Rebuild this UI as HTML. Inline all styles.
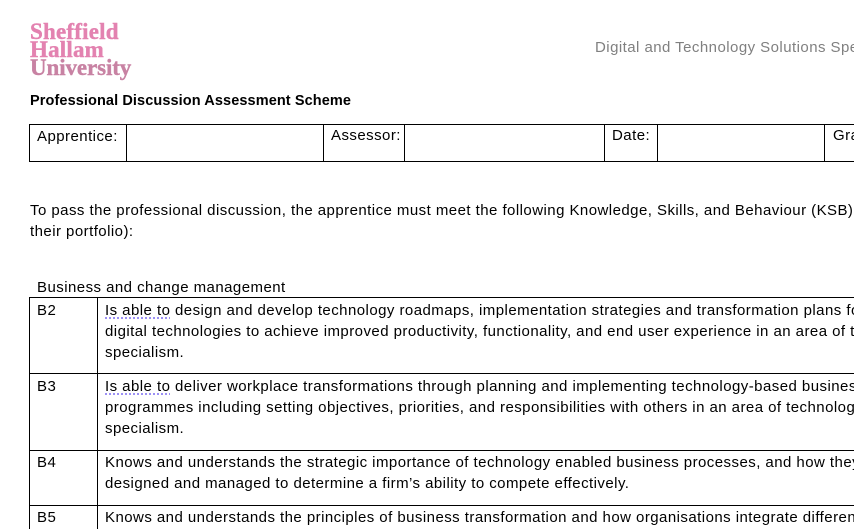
<!DOCTYPE html>
<html><head><meta charset="utf-8"><style>
html,body{margin:0;padding:0;width:854px;height:529px;overflow:hidden;background:#fff}
#w{position:relative;width:854px;height:529px;overflow:hidden}
body{font-family:"Liberation Sans",sans-serif;color:#000}
.t{position:absolute;white-space:nowrap;font-size:15px;letter-spacing:0.45px;line-height:21px}
.l{position:absolute;background:#000}
.logo{position:absolute;left:30px;font-family:"Liberation Serif",serif;font-weight:bold;font-size:23px;line-height:18px;letter-spacing:0.2px;-webkit-text-stroke:0.4px}
.u{text-decoration:underline dotted #7b6cf0;text-underline-offset:3px}
</style></head><body><div id="w">
<div class="logo" style="top:23px;color:#e382b0">Sheffield</div>
<div class="logo" style="top:41px;color:#e382b0">Hallam</div>
<div class="logo" style="top:59px;color:#c882a3;letter-spacing:-0.1px">University</div>
<div class="t" style="left:595px;top:37px;color:#808080">Digital and Technology Solutions Specialist</div>
<div class="t" style="left:30px;top:91px;font-weight:bold;font-size:14.5px;letter-spacing:0.1px">Professional Discussion Assessment Scheme</div>

<div class="l" style="left:29px;top:124px;width:825px;height:1px"></div>
<div class="l" style="left:29px;top:161px;width:825px;height:1px"></div>
<div class="l" style="left:29px;top:124px;width:1px;height:38px"></div>
<div class="l" style="left:126px;top:124px;width:1px;height:38px"></div>
<div class="l" style="left:323px;top:124px;width:1px;height:38px"></div>
<div class="l" style="left:404px;top:124px;width:1px;height:38px"></div>
<div class="l" style="left:604px;top:124px;width:1px;height:38px"></div>
<div class="l" style="left:657px;top:124px;width:1px;height:38px"></div>
<div class="l" style="left:824px;top:124px;width:1px;height:38px"></div>
<div class="t" style="left:37px;top:126px">Apprentice:</div>
<div class="t" style="left:331px;top:125px">Assessor:</div>
<div class="t" style="left:612px;top:125px">Date:</div>
<div class="t" style="left:833px;top:125px">Grade</div>

<div class="t" style="left:30px;top:200px">To pass the professional discussion, the apprentice must meet the following Knowledge, Skills, and Behaviour (KSB) objectives (evidenced in</div>
<div class="t" style="left:30px;top:221px">their portfolio):</div>

<div class="t" style="left:37px;top:277px">Business and change management</div>
<div class="l" style="left:29px;top:297px;width:825px;height:1px"></div>
<div class="l" style="left:29px;top:373px;width:825px;height:1px"></div>
<div class="l" style="left:29px;top:450px;width:825px;height:1px"></div>
<div class="l" style="left:29px;top:505px;width:825px;height:1px"></div>
<div class="l" style="left:29px;top:297px;width:1px;height:232px"></div>
<div class="l" style="left:97px;top:297px;width:1px;height:232px"></div>

<div class="t" style="left:37px;top:300px">B2</div>
<div class="t" style="left:105px;top:300px"><span class="u">Is able to</span> design and develop technology roadmaps, implementation strategies and transformation plans for</div>
<div class="t" style="left:105px;top:321px">digital technologies to achieve improved productivity, functionality, and end user experience in an area of technology</div>
<div class="t" style="left:105px;top:342px">specialism.</div>

<div class="t" style="left:37px;top:376px">B3</div>
<div class="t" style="left:105px;top:376px"><span class="u">Is able to</span> deliver workplace transformations through planning and implementing technology-based business</div>
<div class="t" style="left:105px;top:397px">programmes including setting objectives, priorities, and responsibilities with others in an area of technology</div>
<div class="t" style="left:105px;top:418px">specialism.</div>

<div class="t" style="left:37px;top:452px">B4</div>
<div class="t" style="left:105px;top:452px">Knows and understands the strategic importance of technology enabled business processes, and how they are</div>
<div class="t" style="left:105px;top:473px">designed and managed to determine a firm’s ability to compete effectively.</div>

<div class="t" style="left:37px;top:507px">B5</div>
<div class="t" style="left:105px;top:507px">Knows and understands the principles of business transformation and how organisations integrate different</div>
</div></body></html>
